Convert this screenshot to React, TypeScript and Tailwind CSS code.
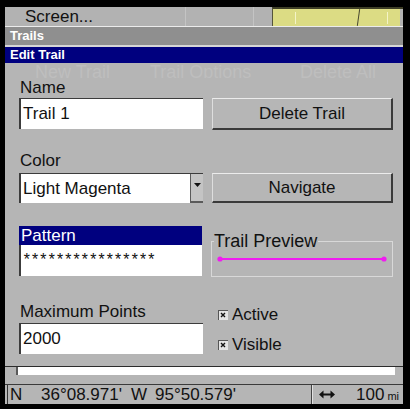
import React from 'react';

const font = "font-['Liberation_Sans',Arial,sans-serif]";
const narrow = "font-['Liberation_Sans_Narrow','Liberation_Sans',Arial,sans-serif]";

const TextBox = ({ value, className = '' }: { value: string; className?: string }) => (
  <div
    className={`h-[31px] w-[184px] bg-white border-t border-l-2 border-t-[#3c3c3c] border-l-[#3c3c3c] flex items-center pl-[2px] text-[17px] text-[#111] ${className}`}
  >
    {value}
  </div>
);

const Button = ({ label, h }: { label: string; h: string }) => (
  <div
    className={`${h} w-[181px] bg-[#b6b6b6] border-t border-l border-t-[#ececec] border-l-[#dedede] border-r-2 border-b-2 border-r-[#3a3a3a] border-b-[#3a3a3a] flex items-center justify-center text-[17px] text-[#111]`}
  >
    {label}
  </div>
);

const Check = ({ label }: { label: string }) => (
  <div className="flex items-center h-[18px]">
    <svg width="10" height="10" viewBox="0 0 10 10" className="mr-[4px]">
      <rect x="0" y="0" width="10" height="10" fill="#e4e4e4" />
      <path d="M0 0.5H10M0.5 0V10" stroke="#555" strokeWidth="1" />
      <path d="M3 3L7 7M7 3L3 7" stroke="#111" strokeWidth="1.4" />
    </svg>
    <span className="text-[17px] text-[#111]">{label}</span>
  </div>
);

export default function App() {
  return (
    <div className={`w-[410px] h-[409px] bg-black pt-[7px] pl-[5px] pr-[7px] pb-[5px] flex flex-col ${font}`}>
      {/* top screen bar */}
      <div className="h-[19px] flex">
        <div className="w-[267px] bg-[#b2b2b2] flex items-center pl-[20px] text-[17px] text-[#111] relative">
          Screen...
          <div className="absolute left-[180px] top-0 h-full w-[1px] bg-[#c4c4c4]" />
          <div className="absolute left-[248px] top-0 h-full w-[1px] bg-[#c4c4c4]" />
        </div>
        <div className="flex-1 bg-[#dcdc84] border-t-2 border-l border-t-[#3e3e26] border-l-[#55553a] relative">
          <div className="absolute left-[85px] top-0 h-full w-[1px] bg-[#4a4a30] rotate-[8deg]" />
          <div className="absolute left-[22px] top-[3px] h-[12px] w-[1px] bg-[#f4f4c8]" />
          <div className="absolute left-[114px] top-[3px] h-[12px] w-[1px] bg-[#f4f4c8]" />
          <div className="absolute right-0 top-0 h-full w-[3px] bg-[#b2b2b2]" />
        </div>
      </div>
      <div className="h-[1px] bg-[#ececec]" />
      <div className={`h-[18px] bg-[#8f8f8f] flex items-center pl-[5px] text-[13px] font-bold text-white ${narrow}`}>
        Trails
      </div>
      <div className="h-[2px] bg-[#d6d6d6]" />
      <div className={`h-[16px] bg-[#00007f] flex items-center pl-[5px] text-[13px] font-bold text-white ${narrow}`}>
        Edit Trail
      </div>

      {/* dialog body */}
      <div className="h-[303px] bg-[#b5b5b5] pl-[14px] pr-[10px] flex flex-col overflow-hidden">
        <div className="h-[15px] flex items-start text-[18px] leading-[15px] pt-[2px] text-[#bebebe] overflow-hidden">
          <span className="ml-[16px] w-[115px]">New Trail</span>
          <span className="w-[150px]">Trail Options</span>
          <span>Delete All</span>
        </div>

        <div className="h-[19px] text-[17px] leading-[19px] text-[#111] pl-[1px]">Name</div>
        <div className="mt-[1px] flex items-start gap-[9px]">
          <TextBox value="Trail 1" />
          <Button label="Delete Trail" h="h-[32px]" />
        </div>

        <div className="mt-[21px] h-[19px] text-[17px] leading-[19px] text-[#111] pl-[1px]">Color</div>
        <div className="mt-[3px] flex items-start gap-[9px]">
          <div className="h-[30px] w-[184px] bg-white border-t border-l-2 border-t-[#3c3c3c] border-l-[#3c3c3c] flex items-center text-[17px] text-[#111]">
            <span className="flex-1 pl-[2px]">Light Magenta</span>
            <div className="w-[13px] h-full bg-[#c4c4c4] border-l border-l-[#5a5a5a] border-b-2 border-b-[#5a5a5a] flex items-start justify-center pt-[9px]">
              <svg width="7" height="4" viewBox="0 0 7 4">
                <path d="M0 0H7L3.5 4Z" fill="#111" />
              </svg>
            </div>
          </div>
          <Button label="Navigate" h="h-[30px]" />
        </div>

        <div className="mt-[23px] flex items-start gap-[9px]">
          <div className="w-[184px] flex flex-col">
            <div className="h-[19px] bg-[#00007f] text-white text-[17px] leading-[19px] pl-[2px]">Pattern</div>
            <div className="h-[31px] bg-white border-l-2 border-l-[#3c3c3c] pl-[1px] pt-[8px] font-['Liberation_Mono',monospace] text-[16px] leading-[16px] tracking-[-1.3px] text-[#111]">
              ****************
            </div>
          </div>
          <fieldset className="mt-[5px] w-[180px] border border-[#d8d8d8]">
            <legend className="ml-[2px] pr-[1px] text-[18px] leading-[20px] text-[#111]">Trail Preview</legend>
            <div className="h-[25px] pt-[5px] px-[5px]">
              <svg width="170" height="6" viewBox="0 0 170 6">
                <line x1="3" y1="3" x2="167" y2="3" stroke="#f01cf0" strokeWidth="2" />
                <circle cx="3" cy="3" r="2.6" fill="#f01cf0" />
                <circle cx="167" cy="3" r="2.6" fill="#f01cf0" />
              </svg>
            </div>
          </fieldset>
        </div>

        <div className="mt-[25px] flex items-start gap-[9px]">
          <div className="w-[184px] flex flex-col">
            <div className="h-[19px] text-[17px] leading-[19px] text-[#111] pl-[1px]">Maximum Points</div>
            <TextBox value="2000" className="mt-[2px]" />
          </div>
          <div className="pl-[6px] pt-[4px] flex flex-col gap-[12px]">
            <Check label="Active" />
            <Check label="Visible" />
          </div>
        </div>
      </div>

      <div className="h-[1px] bg-[#2c2c2c]" />
      <div className="h-[8px] bg-[#b5b5b5] flex pl-[11px] pr-[8px]">
        <div className="flex-1 bg-white border-l-2 border-l-[#5a5a5a]" />
      </div>
      <div className="h-[9px] bg-[#b5b5b5]" />

      {/* status bar */}
      <div className="h-[20px] bg-[#b5b5b5] border-t border-t-[#3a3a3a] flex items-center text-[17px] text-[#111]">
        <div className="ml-[2px] w-[1px] h-full bg-[#333]" />
        <span className="ml-[2px] w-[31px]">N</span>
        <span className="w-[90px]">36°08.971'</span>
        <span className={`w-[24px] ${narrow}`}>W</span>
        <span className="w-[156px]">95°50.579'</span>
        <div className="w-[1px] h-full bg-[#444]" />
        <div className="w-[1px] h-full bg-[#e0e0e0]" />
        <svg width="16" height="9" viewBox="0 0 16 9" className="ml-[6px] mr-[21px]">
          <path d="M2 4.5H14" stroke="#111" strokeWidth="2" />
          <path d="M0 4.5L4.5 0.5V8.5Z M16 4.5L11.5 0.5V8.5Z" fill="#111" />
        </svg>
        <span>100</span>
        <span className="ml-[3px] text-[11px] mt-[3px]">mi</span>
      </div>
    </div>
  );
}
